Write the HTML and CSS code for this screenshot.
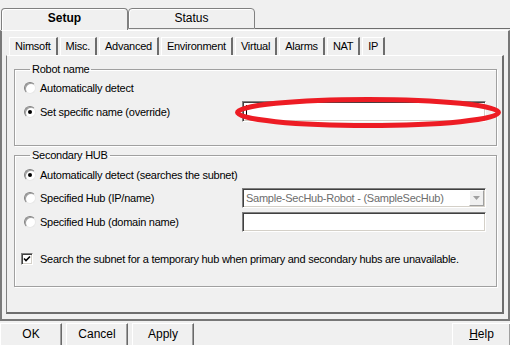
FILE: index.html
```html
<!DOCTYPE html>
<html lang="en">
<head>
    <meta charset="UTF-8">
    <title>Robot Setup</title>
    <link rel="stylesheet" href="styles.css">
</head>
<body>
    <div class="window">
        <div class="tabstrip">
            <div class="tab active">Setup</div>
            <div class="tab">Status</div>
            <div class="tab-fill"></div>
        </div>

        <div class="panel">
            <div class="subtabs">
                <div class="subtab">Nimsoft</div>
                <div class="subtab">Misc.</div>
                <div class="subtab">Advanced</div>
                <div class="subtab">Environment</div>
                <div class="subtab">Virtual</div>
                <div class="subtab">Alarms</div>
                <div class="subtab">NAT</div>
                <div class="subtab">IP</div>
            </div>

            <div class="subpanel">
                <fieldset class="group group-robot">
                    <legend>Robot name</legend>
                    <div class="row">
                        <span class="radio"></span>
                        <span>Automatically detect</span>
                    </div>
                    <div class="row row-field">
                        <span class="radio checked"></span>
                        <span>Set specific name (override)</span>
                        <div class="field"><span class="caret"></span></div>
                    </div>
                </fieldset>

                <fieldset class="group group-hub">
                    <legend>Secondary HUB</legend>
                    <div class="row">
                        <span class="radio checked"></span>
                        <span>Automatically detect (searches the subnet)</span>
                    </div>
                    <div class="row row-field">
                        <span class="radio"></span>
                        <span>Specified Hub (IP/name)</span>
                        <div class="field combo">
                            <span class="combo-text">Sample-SecHub-Robot - (SampleSecHub)</span>
                            <span class="combo-btn">
                                <svg width="7" height="4" viewBox="0 0 7 4"><path d="M0 0h7L3.5 4z" fill="#a0a0a0"/></svg>
                            </span>
                        </div>
                    </div>
                    <div class="row row-field">
                        <span class="radio"></span>
                        <span>Specified Hub (domain name)</span>
                        <div class="field"></div>
                    </div>
                    <div class="row row-check">
                        <span class="checkbox">
                            <svg width="8" height="8" viewBox="0 0 8 8"><path d="M1 3.5l2 2 4-4" fill="none" stroke="#000" stroke-width="1.6"/></svg>
                        </span>
                        <span>Search the subnet for a temporary hub when primary and secondary hubs are unavailable.</span>
                    </div>
                </fieldset>
            </div>
        </div>

        <div class="buttons">
            <div class="btn">OK</div>
            <div class="btn">Cancel</div>
            <div class="btn">Apply</div>
            <div class="btn btn-help"><u>H</u>elp</div>
        </div>

        <svg class="highlight" width="266" height="31" viewBox="0 0 266 31">
            <ellipse cx="133" cy="15.5" rx="130.5" ry="13" fill="none" stroke="#ed1c24" stroke-width="5"/>
        </svg>
    </div>
</body>
</html>
```

FILE: styles.css
```css
body {
    margin: 0;
    background: #f0f0f0;
    font-family: "Liberation Sans", Arial, sans-serif;
    font-size: 11px;
    letter-spacing: -0.25px;
    color: #000;
}
.window {
    position: relative;
    width: 510px;
    height: 345px;
    overflow: hidden;
}

/* outer tabs */
.tabstrip {
    display: flex;
    height: 30px;
    padding: 8px 0 0 1px;
    box-sizing: border-box;
}
.tab {
    width: 127px;
    height: 21px;
    box-sizing: border-box;
    border: 1px solid #808080;
    border-radius: 4px 4px 0 0;
    box-shadow: inset 1px 1px 0 #fff;
    text-align: center;
    line-height: 18px;
    font-size: 12px;
    letter-spacing: 0;
}
.tab.active {
    height: 22px;
    border-bottom: none;
    font-weight: bold;
}
.tab-fill {
    flex: 1;
    height: 21px;
    box-sizing: border-box;
    border-bottom: 1px solid #6d6d6d;
}

/* outer panel */
.panel {
    height: 291px;
    box-sizing: border-box;
    border: solid #777;
    border-width: 0 2px 2px 1px;
    border-left: 2px solid #7a7a7a;
    border-top: 1px solid #fff;
    padding: 6px 4px 5px 4px;
    display: flex;
    flex-direction: column;
}
.subtabs {
    display: flex;
    gap: 2px;
    height: 18px;
    padding-left: 3px;
}
.subtab {
    padding: 0 5px;
    box-sizing: border-box;
    height: 18px;
    line-height: 17px;
    border-left: 1px solid #fff;
    border-top: 1px solid #fff;
    border-right: 2px solid #6d6d6d;
}
.subpanel {
    flex: 1;
    box-sizing: border-box;
    border: 1px solid #fff;
    border-left-color: #808080;
    border-right: 2px solid #6d6d6d;
    border-bottom: 2px solid #6d6d6d;
    padding: 7px 5px 0 7px;
}

/* group boxes */
.group {
    margin: 0;
    padding: 4px 10px 23px 9px;
    border: 1px solid #a0a0a0;
    box-shadow: 1px 1px 0 #fff, inset 1px 1px 0 #fff;
    display: flex;
    flex-direction: column;
}
.group legend {
    margin-left: 6px;
    padding: 0 2px;
    line-height: 13px;
}
.group-hub {
    margin-top: 3px;
    padding-top: 5px;
    padding-bottom: 20px;
}
.row {
    display: flex;
    align-items: center;
    height: 16px;
}
.row-field {
    height: 21px;
    margin-top: 5px;
}
.group-hub .row-field {
    height: 20px;
}
.group-hub .row-field + .row-field {
    margin-top: 4px;
}
.row-check {
    height: 14px;
    margin-top: 20px;
}

.radio {
    position: relative;
    width: 12px;
    height: 12px;
    box-sizing: border-box;
    margin-right: 4px;
    border-radius: 50%;
    background: #fff;
    border: 1px solid;
    border-color: #808080 #e8e8e8 #e8e8e8 #808080;
    box-shadow: inset 1px 1px 0 #a0a0a0;
}
.radio.checked::after {
    content: "";
    position: absolute;
    left: 3px;
    top: 3px;
    width: 4px;
    height: 4px;
    border-radius: 50%;
    background: #000;
}
.checkbox {
    width: 12px;
    height: 12px;
    box-sizing: border-box;
    margin: 0 7px 0 -3px;
    background: #fff;
    border: 1px solid;
    border-color: #808080 #fff #fff #808080;
    box-shadow: inset 1px 1px 0 #404040, inset -1px -1px 0 #d4d0c8;
    display: flex;
    align-items: center;
    justify-content: center;
}

.field {
    margin-left: auto;
    width: 244px;
    height: 100%;
    box-sizing: border-box;
    background: #fff;
    border: 1px solid;
    border-color: #808080 #fff #fff #808080;
    box-shadow: inset 1px 1px 0 #404040, inset -1px -1px 0 #d4d0c8;
    display: flex;
    align-items: center;
    padding-left: 3px;
}
.caret {
    width: 1px;
    height: 13px;
    background: #000;
}
.combo {
    padding: 0 1px 0 3px;
}
.combo-text {
    flex: 1;
    color: #6d6d6d;
}
.combo-btn {
    width: 15px;
    height: 16px;
    box-sizing: border-box;
    background: #f0f0f0;
    border: 1px solid;
    border-color: #fff #a0a0a0 #a0a0a0 #fff;
    display: flex;
    align-items: center;
    justify-content: center;
}

/* bottom buttons */
.buttons {
    display: flex;
    gap: 4px;
    margin-top: 2px;
}
.btn {
    width: 62px;
    height: 24px;
    box-sizing: border-box;
    border: 1px solid;
    border-color: #fff #696969 #696969 #fff;
    box-shadow: inset -1px -1px 0 #a0a0a0;
    text-align: center;
    line-height: 21px;
    font-size: 12px;
    letter-spacing: 0;
}
.btn-help {
    margin-left: auto;
    width: 58px;
    border-right: none;
}

.highlight {
    position: absolute;
    left: 235px;
    top: 97px;
}
```
